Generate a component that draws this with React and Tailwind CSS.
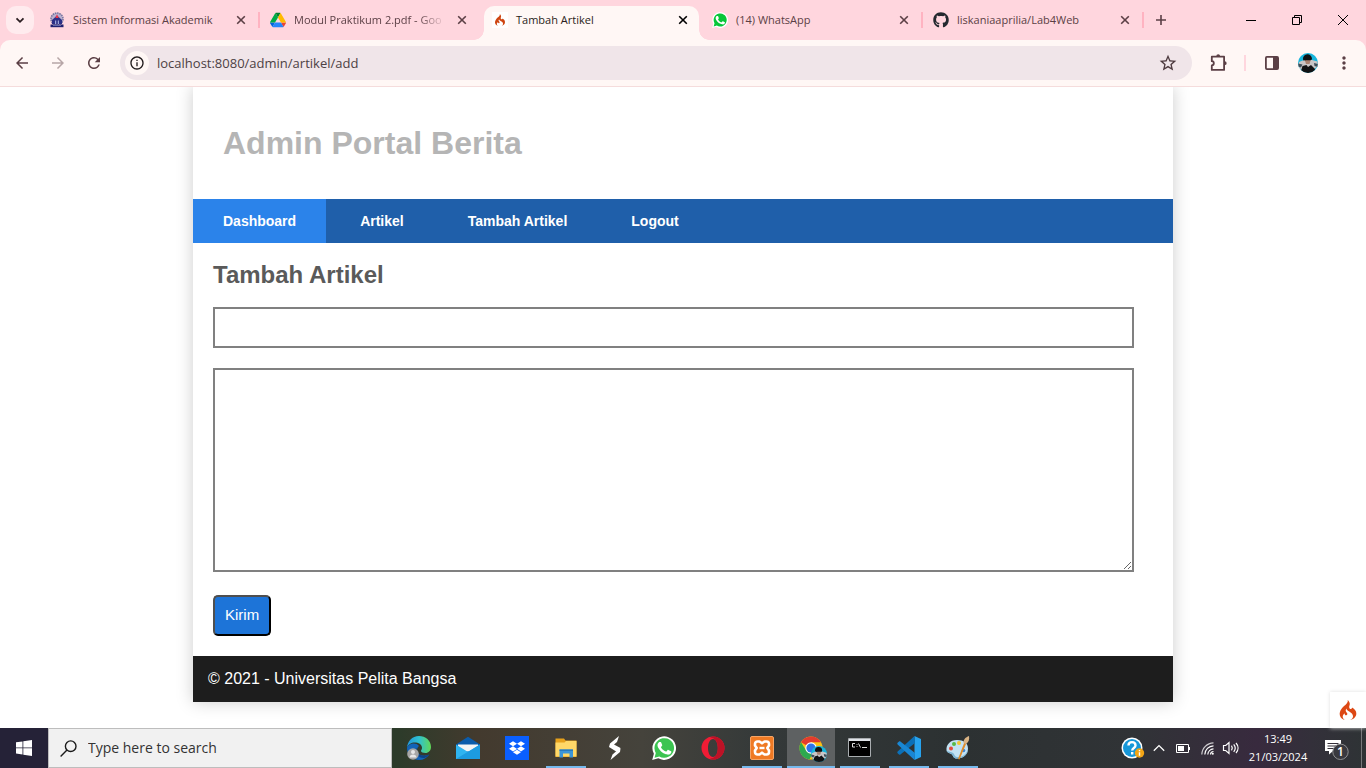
import React from "react";
import { MdArrowBack, MdArrowForward, MdRefresh, MdInfoOutline, MdStarBorder, MdMoreVert } from "react-icons/md";
import { FaGithub, FaDropbox } from "react-icons/fa";
import { SiCodeigniter } from "react-icons/si";

function CampusIcon() {
  return (
    <svg className="size-4" viewBox="0 0 16 16" aria-hidden="true">
      <circle cx="8" cy="7" r="6" fill="#b9b0cf" stroke="#77759f" strokeWidth="1.6" strokeDasharray="1.6 .7" />
      <path d="M3 8l5-4.500 5 4.500v4H3z" fill="#2c2f86" />
      <path d="M6.300 6L8 2.300 9.700 6z" fill="#e8344a" />
      <path d="M6 12V8.500h1.200V12zM8.800 12V8.500H10V12z" fill="#9ba4d8" />
      <path d="M1.500 12.500h13v2.700h-13z" fill="#20216f" />
      <path d="M4 13.500h8" stroke="#7f86c8" strokeWidth=".7" />
    </svg>
  );
}

function DriveIcon() {
  return (
    <svg className="size-4" viewBox="0 0 87.300 78" aria-hidden="true">
      <path d="m6.600 66.850 3.850 6.650c.8 1.400 1.950 2.500 3.300 3.300l13.750-23.800h-27.500c0 1.550.4 3.100 1.200 4.500z" fill="#0066da" />
      <path d="m43.650 25-13.750-23.800c-1.350.8-2.500 1.900-3.300 3.300l-25.400 44a9.060 9.060 0 0 0 -1.200 4.500h27.500z" fill="#00ac47" />
      <path d="m73.550 76.800c1.350-.8 2.500-1.900 3.300-3.300l1.600-2.750 7.650-13.250c.8-1.400 1.200-2.950 1.200-4.500h-27.502l5.852 11.500z" fill="#ea4335" />
      <path d="m43.650 25 13.750-23.800c-1.350-.8-2.900-1.200-4.500-1.200h-18.500c-1.600 0-3.150.45-4.500 1.200z" fill="#00832d" />
      <path d="m59.800 53h-32.300l-13.750 23.800c1.350.8 2.900 1.200 4.500 1.200h50.800c1.600 0 3.150-.45 4.500-1.200z" fill="#2684fc" />
      <path d="m73.400 26.500-12.700-22c-.8-1.400-1.950-2.500-3.300-3.300l-13.750 23.800 16.150 28h27.450c0-1.550-.4-3.100-1.200-4.500z" fill="#ffba00" />
    </svg>
  );
}

function WhatsappIcon({ className, green }) {
  return (
    <svg className={className} viewBox="0 0 24 24" aria-hidden="true">
      <path d="M.2 24l1.700-6.200A11.800 11.800 0 1 1 6.300 22.300z" fill="#fff" />
      <path d="M2.500 21.700l1.300-4.800a9.800 9.800 0 1 1 3.500 3.500z" fill={green} />
      <path d="M9.200 6.500c-.3-.6-.5-.6-.8-.6h-.7c-.3 0-.7.1-1 .5-.4.400-1.200 1.200-1.200 2.800s1.200 3.200 1.400 3.500c.2.200 2.400 3.800 5.800 5.100 2.900 1.100 3.500.9 4.100.8.600 0 2-.8 2.300-1.600.3-.8.3-1.500.2-1.600-.1-.200-.3-.300-.7-.4l-2.200-1.100c-.3-.1-.6-.2-.8.2l-1.100 1.300c-.2.200-.4.300-.7.100-.4-.2-1.500-.5-2.800-1.700-1-.9-1.700-2.100-1.900-2.400-.2-.3 0-.5.2-.7l.5-.6.4-.6c.1-.2 0-.4 0-.600z" fill="#fff" />
    </svg>
  );
}

const tabs = [
  { title: "Sistem Informasi Akademik", icon: <CampusIcon />, sep: true },
  { title: "Modul Praktikum 2.pdf - Goo", icon: <DriveIcon />, fade: true },
  {
    title: "Tambah Artikel",
    icon: (
      <span className="flex size-4 items-center justify-center bg-white">
        <SiCodeigniter className="size-3 text-[#cf4410]" />
      </span>
    ),
    active: true,
  },
  { title: "(14) WhatsApp", icon: <WhatsappIcon className="size-4" green="#07c638" />, sep: true },
  { title: "liskaniaaprilia/Lab4Web", icon: <FaGithub className="size-4 text-[#24292f]" />, sep: true },
];

function Tab({ title, icon, active, sep, fade }) {
  return (
    <div
      className={
        active
          ? "relative mx-[3px] flex h-[34px] w-[215px] min-w-0 items-center gap-2 self-end rounded-t-[10px] bg-[#fff7f5] pb-1.5 pl-2 pr-2"
          : "flex h-7 w-[221px] min-w-0 items-center gap-2 pl-2.5"
      }
    >
      {active && (
        <>
          <span className="absolute -left-2.5 bottom-0 size-2.5 bg-[radial-gradient(circle_at_0_0,transparent_9.500px,#fff7f5_10px)]" />
          <span className="absolute -right-2.5 bottom-0 size-2.5 bg-[radial-gradient(circle_at_100%_0,transparent_9.500px,#fff7f5_10px)]" />
        </>
      )}
      <span className="shrink-0">{icon}</span>
      <a
        href="#"
        className={
          "min-w-0 flex-1 whitespace-nowrap text-[11px] leading-4 " +
          (active ? "text-[#2a1d20]" : "text-[#5b3f45]") +
          (fade ? " [mask-image:linear-gradient(to_right,black_calc(100%-28px),transparent)]" : "")
        }
      >
        {title}
      </a>
      <button
        aria-label={"Close " + title}
        className={
          active
            ? "flex size-4 shrink-0 items-center justify-center text-black"
            : "mr-px flex size-4 shrink-0 items-center justify-center text-[#5b3f45]"
        }
      >
        <svg className="size-2.5" viewBox="0 0 10 10" aria-hidden="true">
          <path d="M1.200 1.200l7.600 7.600M8.800 1.200L1.200 8.800" stroke="currentColor" strokeWidth="1.600" />
        </svg>
      </button>
      {!active && <span className={sep ? "h-4 w-0.5 shrink-0 bg-[#ffb3c1]" : "w-0.5 shrink-0"} />}
    </div>
  );
}

function Avatar({ className }) {
  return (
    <svg className={className} viewBox="0 0 20 20" aria-hidden="true">
      <clipPath id="face">
        <circle cx="10" cy="10" r="10" />
      </clipPath>
      <g clipPath="url(#face)">
        <path d="M0 0h20v20H0z" fill="#17b5dc" />
        <path d="M1 9l5-2h8l5.500 1.500L20 13l-5 4H4l-4-3z" fill="#c9c6c7" />
        <path d="M6.500 6h6.500l-1.500 5H8z" fill="#a98271" />
        <path d="M5 6a4.300 4.300 0 0 1 9-.5c0 2-1.500 1.800-4.200 1.800S5 8 5 6z" fill="#101214" />
        <path d="M0 10.500l4.500 1-1.500 3-3-1zM16 10l4 1v3l-3.500-1z" fill="#3f4f5a" />
        <path d="M3 18l1.500-5 4-1 1.500 2 3-2 4 4-1 4.500H5z" fill="#111214" />
      </g>
    </svg>
  );
}

function BrowserChrome() {
  return (
    <header className="relative z-10 text-[#5b3f45]">
      <div className="flex h-10 items-center bg-[#ffd6de] pl-1.5">
        <button aria-label="Search tabs" className="mr-[5px] flex size-7 shrink-0 items-center justify-center rounded-[10px] bg-[#ffebee] text-[#2a1d20]">
          <svg className="size-4" viewBox="0 0 16 16" aria-hidden="true">
            <path d="M4.500 6.300L8 9.800l3.500-3.500" fill="none" stroke="currentColor" strokeWidth="1.800" />
          </svg>
        </button>
        <nav className="flex h-10 min-w-0 items-center" aria-label="Tabs">
          {tabs.map((t) => (
            <Tab key={t.title} {...t} />
          ))}
        </nav>
        <button aria-label="New tab" className="ml-[7px] flex size-5 shrink-0 items-center justify-center">
          <svg className="size-3" viewBox="0 0 12 12" aria-hidden="true">
            <path d="M6 1v10M1 6h10" stroke="currentColor" strokeWidth="1.600" />
          </svg>
        </button>
        <div className="ml-auto flex h-10 shrink-0 text-black">
          {[
            ["Minimize", "M1 6.500h10"],
            ["Restore", "M1.500 3.500h7v7h-7zM3.500 3.500v-2h7v7h-2"],
            ["Close window", "M1 1l10 10M11 1L1 11"],
          ].map(([label, d]) => (
            <button key={label} aria-label={label} className="flex w-[46px] items-center justify-center">
              <svg className="size-3" viewBox="0 0 12 12" aria-hidden="true">
                <path d={d} fill="none" stroke="currentColor" />
              </svg>
            </button>
          ))}
        </div>
      </div>
      <div className="bg-[#ffd6de]">
        <div className="flex h-[47px] items-center rounded-t-[10px] border-b border-[#f5dcdc] bg-[#fff7f5] pl-2 pr-3">
          <div className="flex shrink-0 gap-2">
            <button aria-label="Back" className="flex size-7 items-center justify-center"><MdArrowBack className="size-[18px]" /></button>
            <button aria-label="Forward" className="flex size-7 items-center justify-center text-[#b7a6a7]"><MdArrowForward className="size-[18px]" /></button>
            <button aria-label="Reload" className="flex size-7 items-center justify-center"><MdRefresh className="size-[18px]" /></button>
          </div>
          <div className="ml-3 flex h-[34px] min-w-0 flex-1 items-center rounded-full bg-[#f0e5e9] pl-[5px] pr-3.5">
            <button aria-label="Site information" className="flex size-6 shrink-0 items-center justify-center rounded-full bg-[#fff7f5] text-[#201a1b]">
              <MdInfoOutline className="size-4" />
            </button>
            <input
              type="text"
              aria-label="Address"
              defaultValue="localhost:8080/admin/artikel/add"
              className="ml-2 min-w-0 flex-1 bg-transparent text-[13px] leading-5 text-[#4d4144] outline-none"
            />
            <button aria-label="Bookmark" className="shrink-0 text-[#4d3a3f]"><MdStarBorder className="size-5" /></button>
          </div>
          <div className="flex shrink-0 items-center pl-3.5">
            <button aria-label="Extensions">
              <svg className="size-6" viewBox="0 0 24 24" fill="none" stroke="currentColor" strokeWidth="1.800" aria-hidden="true">
                <path d="M5.800 5.700h12.300v13.200H5.800v-4.500c2.700-.2 2.700-4 0-4.200z" strokeLinejoin="round" />
                <path d="M10.300 5.200a1.900 1.900 0 0 1 3.800 0zM18.700 10.200a1.900 1.900 0 0 1 0 3.900z" fill="currentColor" stroke="none" />
              </svg>
            </button>
            <span className="ml-3.5 h-4 w-0.5 bg-[#ffd6de]" />
            <button aria-label="Side panel" className="ml-3.5">
              <svg className="size-6" viewBox="0 0 24 24" aria-hidden="true">
                <rect x="5.900" y="5.900" width="12.200" height="12.200" rx="1" fill="none" stroke="currentColor" strokeWidth="1.800" />
                <path d="M13 6h5v12h-5z" fill="currentColor" />
              </svg>
            </button>
            <button aria-label="Profile" className="ml-3.5"><Avatar className="size-5" /></button>
            <button aria-label="Menu" className="ml-4"><MdMoreVert className="size-5" /></button>
          </div>
        </div>
      </div>
    </header>
  );
}

function AdminPage() {
  return (
    <main className="relative flex-1 bg-white pb-[26px] font-['Liberation_Sans',Arial,sans-serif]">
      <div className="mx-auto w-full max-w-[980px] bg-white shadow-[0_0_16px_#cccccc]">
        <h1 className="px-[30px] py-9 text-[32px] font-bold leading-10 text-[#b5b5b5]">Admin Portal Berita</h1>
        <nav className="flex gap-1 bg-[#1f5faa] text-sm font-bold leading-5 text-white" aria-label="Admin">
          <a href="#" className="bg-[#2b83ea] px-[30px] py-3">Dashboard</a>
          <a href="#" className="px-[30px] py-3">Artikel</a>
          <a href="#" className="px-[30px] py-3">Tambah Artikel</a>
          <a href="#" className="px-[30px] py-3">Logout</a>
        </nav>
        <form className="flex flex-col items-start gap-5 pb-5 pl-5 pr-[39px] pt-4" onSubmit={(e) => e.preventDefault()}>
          <h2 className="-mb-1 text-2xl font-bold leading-8 text-[#5a5a5a]">Tambah Artikel</h2>
          <input type="text" aria-label="Judul" className="h-[41px] w-full border-2 border-[#808080] px-2.5 outline-none" />
          <textarea aria-label="Isi" className="h-[204px] w-full resize border-2 border-[#808080] p-2.5 outline-none" />
          <button type="submit" className="mt-[3px] h-[41px] rounded-[5px] border-2 border-b-black border-l-[#4f4f4f] border-r-black border-t-[#4f4f4f] bg-[#1d74d8] px-2.5 text-[15px] text-white">
            Kirim
          </button>
        </form>
        <footer className="bg-[#1d1d1d] px-[15px] py-[11px] text-base leading-6 text-white">© 2021 - Universitas Pelita Bangsa</footer>
      </div>
      <button aria-label="Debug toolbar" className="absolute bottom-0 right-0 flex size-9 items-center justify-center bg-white shadow-[0_0_4px_#dfdfdf]">
        <SiCodeigniter className="size-5 text-[#dd4814]" />
      </button>
    </main>
  );
}

const apps = [
  {
    name: "Edge",
    icon: (
      <svg className="size-6" viewBox="0 0 24 24" aria-hidden="true">
        <defs>
          <linearGradient id="edgeTop" x1="0" x2="1"><stop stopColor="#2196dc" /><stop offset=".5" stopColor="#2fc1d0" /><stop offset="1" stopColor="#62d957" /></linearGradient>
        </defs>
        <path d="M12 0C5 0 .5 5 0 12c1-4 5-6 9-5.500 4 .4 6 3 6 5.500 0 1.500-1 2-1 3 0 1.200 2 2 4.500 2 3 0 5.500-2.500 5.500-6C24 4.500 18.500 0 12 0z" fill="url(#edgeTop)" />
        <path d="M0 12c0 7 5.500 12 12 12 4.500 0 8-2 10.300-5.500-3 1.500-8 2-10.800-1-2-2.200-2-5.500.5-7.500C9 5.500 1 7.500 0 12z" fill="#1264b8" />
        <path d="M8.500 12.500c-1 5 3 10 9 9.500 2-.8 3.600-2 4.800-3.500-3 1.500-8 2-10.800-1-1.500-1.600-1.900-3.500-1.200-5z" fill="#0c4386" />
        <circle cx="6" cy="18" r="5.800" fill="#a7a7a7" />
        <circle cx="6" cy="16" r="2" fill="#e7e7e7" />
        <path d="M2.500 21.500c0-4 7-4 7 0z" fill="#e7e7e7" />
      </svg>
    ),
  },
  {
    name: "Mail",
    icon: (
      <svg className="size-6" viewBox="0 0 24 24" aria-hidden="true">
        <path d="M0 8.500L12 .8l12 7.700V23H0z" fill="#0b5cab" />
        <path d="M2 8.500h20v7H2z" fill="#f4f4f4" />
        <path d="M0 8.500l12 7.500L24 8.500V23H0z" fill="#2fb4f0" />
        <path d="M0 23L24 8.500V23z" fill="#1c9be0" />
      </svg>
    ),
  },
  { name: "Dropbox", icon: <span className="flex size-6 items-center justify-center bg-[#0a5fff]"><FaDropbox className="size-4 text-white" /></span> },
  {
    name: "File Explorer",
    open: true,
    icon: (
      <svg className="size-6" viewBox="0 0 24 24" aria-hidden="true">
        <path d="M1.500 2.500h8.500l1.500 2H22.500V21h-21z" fill="#e7a11b" />
        <path d="M1.500 6.500h9l1.500-1.500h10.500V20.500h-21z" fill="#ffd868" />
        <path d="M5.500 13.500h13.500v8h-3.500v-4h-6.500v4H5.500z" fill="#3b95d8" />
        <path d="M5.500 13.500h13.500v1.500H5.500z" fill="#2779bd" />
      </svg>
    ),
  },
  {
    name: "Quick launcher",
    icon: (
      <svg className="size-6" viewBox="0 0 24 24" aria-hidden="true">
        <path d="M16 0L7 7.500 6 11l8 5 .5-.5L17.500 12 11 8.500l3-2.500z" fill="#fff" />
        <path d="M14 11l3.500 1.500-.5 3.500L7.500 24l2-5.500 4-3.500-2-2z" fill="#fff" />
      </svg>
    ),
  },
  { name: "WhatsApp", icon: <WhatsappIcon className="size-6" green="#3cc451" /> },
  {
    name: "Opera",
    icon: (
      <svg className="size-6" viewBox="0 0 24 24" aria-hidden="true">
        <path fillRule="evenodd" d="M12 .5a11.500 11.500 0 1 0 0 23 11.500 11.500 0 0 0 0-23zM12 3c3 0 4.800 4 4.800 9s-1.800 9-4.800 9-5-4-5-9 2-9 5-9z" fill="#f01c35" />
        <path d="M12.500 .5c6.500 0 11 5.500 11 11.500s-4.500 11.500-11 11.500c-1.500 0-2.500-.4-3.500-1 5 0 7.800-4.500 7.800-10.500S14 1.500 9 1.500c1-.7 2.200-1 3.500-1z" fill="#bd1226" />
      </svg>
    ),
  },
  {
    name: "XAMPP",
    open: true,
    icon: (
      <svg className="size-6" viewBox="0 0 24 24" aria-hidden="true">
        <rect x=".5" y=".5" width="23" height="23" rx="1.500" fill="#ef7a24" stroke="#f5a566" />
        <path
          d="M7.500 5.500h2L12 7.300l2.500-1.800h2A2.500 2.500 0 0 1 19 8v1.500L17.300 12l1.700 2.500V16a2.500 2.500 0 0 1-2.500 2.500h-2L12 16.700l-2.500 1.800h-2A2.500 2.500 0 0 1 5 16v-1.500L6.700 12 5 9.500V8a2.500 2.500 0 0 1 2.500-2.500z"
          fill="none"
          stroke="#fff"
          strokeWidth="2.600"
          strokeLinejoin="round"
        />
        <path d="M9.500 12h5" stroke="#fff" strokeWidth="2.400" />
      </svg>
    ),
  },
  {
    name: "Chrome",
    open: true,
    focused: true,
    icon: (
      <span className="relative block size-6">
        <svg className="size-6" viewBox="0 0 24 24" aria-hidden="true">
          <circle cx="12" cy="12" r="11.500" fill="#fbc116" />
          <path d="M12 12L2 6.300a11.500 11.500 0 0 1 20-.1H12z" fill="#e33b2e" />
          <path d="M2 6.200L7.500 15l5.500 3-2.500 5.500A11.500 11.500 0 0 1 2 6.200z" fill="#2da94f" />
          <circle cx="12" cy="12" r="5.700" fill="#fff" />
          <circle cx="12" cy="12" r="4.600" fill="#2f73e8" />
        </svg>
        <span className="absolute -bottom-0.5 -right-1"><Avatar className="size-4" /></span>
      </span>
    ),
  },
  {
    name: "Command Prompt",
    open: true,
    icon: (
      <svg className="size-6" viewBox="0 0 24 24" aria-hidden="true">
        <path d="M.5 2.500h22v18H.5z" fill="#000" stroke="#a9adb0" />
        <path d="M1 3h21v2H1z" fill="#dfe3e8" />
        <path d="M7 7.500H4.500V11H7M9 8v.8M9 10.200v.8M10.500 7.500l2 4M14 11.500h5" stroke="#ddd" fill="none" />
      </svg>
    ),
  },
  {
    name: "Visual Studio Code",
    open: true,
    icon: (
      <svg className="size-6" viewBox="0 0 24 24" aria-hidden="true">
        <path d="M17.500 0L24 3v18l-6.500 3z" fill="#27a3ee" />
        <path d="M17.500 0L.6 15.600c-.5.500-.5 1.100 0 1.600L2 18.500c.4.300.9.400 1.400 0L18 7z" fill="#0b70b8" />
        <path d="M17.500 24L.6 8.400c-.5-.5-.5-1.100 0-1.600L2 5.500c.4-.3.900-.4 1.400 0L18 17z" fill="#1987d4" />
      </svg>
    ),
  },
  {
    name: "Paint",
    open: true,
    icon: (
      <svg className="size-6" viewBox="0 0 24 24" aria-hidden="true">
        <path d="M11 4C4 4 0 9 .5 14c.5 3.500 4 3 5.500 4.500 1.500 1.600 1 4 5 4C18 22.500 22 18 22 12.500 22 7 17.500 4 11 4z" fill="#c3e2f3" />
        <path d="M.5 14c.5 3.500 4 3 5.500 4.500 1.500 1.600 1 4 5 4 7 0 11-4.500 11-10-1 5-5 8.500-10 8.500-4 0-3-2.500-5-4-2-1.300-5-.8-6.500-3z" fill="#7db4d3" />
        <circle cx="5" cy="12.500" r="2" fill="#e34a3c" />
        <circle cx="8" cy="8" r="2" fill="#58b947" />
        <circle cx="13" cy="7" r="2" fill="#f4c531" />
        <circle cx="17.500" cy="14.500" r="1.800" fill="#3d84d6" />
        <path d="M12 23L18.500 6l2 .8L13.500 23.500z" fill="#df8c2b" />
        <path d="M17.500 7c0-4 2-5.500 5.500-7 .5 3 0 6-3 8z" fill="#d9b384" />
      </svg>
    ),
  },
];

function Taskbar() {
  return (
    <footer className="flex h-10 items-center bg-[linear-gradient(90deg,#252237_0%,#252237_4%,#2c3b2a_29%,#433a2e_35%,#45433c_47%,#343939_56%,#2c3132_70%,#303336_83%,#382a3e_92%,#33303a_96%,#2e3335_100%)] text-white">
      <button aria-label="Start" className="flex h-10 w-12 shrink-0 items-center justify-center">
        <svg className="size-4" viewBox="0 0 16 16" fill="#fff" aria-hidden="true">
          <path d="M0 2.300L6.500 1.400v6.100H0zM7.300 1.300L16 0v7.500H7.300zM0 8.300h6.500v6.200L0 13.600zM7.300 8.300H16V16l-8.700-1.300z" />
        </svg>
      </button>
      <label className="flex h-10 w-[344px] min-w-0 items-center border border-[#bdbdbd] bg-[#f1f1f1] pl-[11px]">
        <svg className="size-[17px] shrink-0" viewBox="0 0 17 17" fill="none" stroke="#1b1b1b" strokeWidth="1.400" aria-hidden="true">
          <circle cx="10.700" cy="6.200" r="5.300" />
          <path d="M7 10L.6 16.400" />
        </svg>
        <input type="text" aria-label="Search" placeholder="Type here to search" className="ml-[11px] min-w-0 flex-1 bg-transparent text-sm outline-none placeholder:text-[#333333]" />
      </label>
      <nav className="ml-[3px] flex shrink-0 gap-px" aria-label="Applications">
        {apps.map((a) => (
          <button
            key={a.name}
            aria-label={a.name}
            className={"flex h-10 w-12 flex-col items-center justify-between pt-2 " + (a.focused ? "bg-[#5e6162]" : "")}
          >
            {a.icon}
            <span className={a.focused ? "h-0.5 w-12 bg-[#76b9ed]" : a.open ? "h-0.5 w-10 bg-[#76b9ed]" : "h-0.5 w-10"} />
          </button>
        ))}
      </nav>
      <div className="ml-auto flex h-10 shrink-0 items-center">
        <button aria-label="Help">
          <svg className="size-6" viewBox="0 0 24 24" aria-hidden="true">
            <circle cx="11" cy="12" r="10.500" fill="#fff" />
            <circle cx="11" cy="12" r="9" fill="#1797d8" />
            <path d="M7.500 9.500c0-4.500 7-4.500 7 0 0 2.500-3.300 2.500-3.300 5M11.200 16v2.400" fill="none" stroke="#fff" strokeWidth="2.400" />
            <circle cx="18.500" cy="17" r="4.700" fill="#f2a516" />
            <path d="M18.500 14.100v1.200M18.500 16.300v3.500" stroke="#fff" strokeWidth="1.400" />
          </svg>
        </button>
        <button aria-label="Show hidden icons" className="ml-2">
          <svg className="h-4 w-3" viewBox="0 0 12 16" aria-hidden="true"><path d="M.8 10.800L6 5.600l5.200 5.200" fill="none" stroke="#fff" strokeWidth="1.300" /></svg>
        </button>
        <button aria-label="Battery" className="ml-[11px]">
          <svg className="size-4" viewBox="0 0 16 16" aria-hidden="true">
            <path d="M.5 4.500h12v8H.5zM13.500 7v3" fill="none" stroke="#fff" />
            <path d="M2 6h6v5H2z" fill="#fff" />
          </svg>
        </button>
        <button aria-label="Network" className="ml-2">
          <svg className="size-4" viewBox="0 0 16 16" fill="none" stroke="#fff" strokeWidth="1.200" aria-hidden="true">
            <path d="M1.800 14.500A12 12 0 0 1 13.500 2.800" opacity=".75" />
            <path d="M4.800 14.500a9 9 0 0 1 8.700-8.700M7.800 14.500a6 6 0 0 1 5.700-5.700" />
            <path d="M10.500 14.500a3.200 3.200 0 0 1 3-3" />
            <circle cx="12.800" cy="13.800" r="1" fill="#fff" stroke="none" />
          </svg>
        </button>
        <button aria-label="Volume" className="ml-1.5">
          <svg className="h-4 w-[18px]" viewBox="0 0 18 16" fill="none" stroke="#fff" strokeWidth="1.200" aria-hidden="true">
            <path d="M1.500 5.500h2.200L7 2.500v11l-3.300-3H1.500z" />
            <path d="M9.500 5.700c1 1.500 1 3.200 0 4.700M11.700 4.300c2 2.400 2 5.100 0 7.500M14 3c2.700 3 2.700 7 0 10" />
          </svg>
        </button>
        <time className="ml-2 w-[60px] whitespace-nowrap text-center text-[11px] leading-[18px]" dateTime="2024-03-21T13:49">
          13:49
          <br />
          21/03/2024
        </time>
        <button aria-label="Notifications" className="ml-[17px] mr-3">
          <svg className="size-6" viewBox="0 0 24 24" aria-hidden="true">
            <path d="M0 4h16v11H8l-4 3.500V15H0z" fill="#fff" />
            <path d="M2.500 7.500h11M2.500 10h11M2.500 12.500h7" stroke="#34303a" />
            <circle cx="15.500" cy="15.800" r="7.700" fill="#39393f" stroke="#8f9092" />
            <text x="15.500" y="20.300" textAnchor="middle" fontSize="12" fontWeight="600" fontFamily="Open Sans, sans-serif" fill="#fff">1</text>
          </svg>
        </button>
        <span className="mr-1 h-10 w-px bg-[#77797b]" />
      </div>
    </footer>
  );
}

export default function App() {
  return (
    <div className="flex min-h-screen flex-col overflow-x-hidden bg-white font-['Open_Sans','Noto_Sans',sans-serif]">
      <BrowserChrome />
      <AdminPage />
      <Taskbar />
    </div>
  );
}
